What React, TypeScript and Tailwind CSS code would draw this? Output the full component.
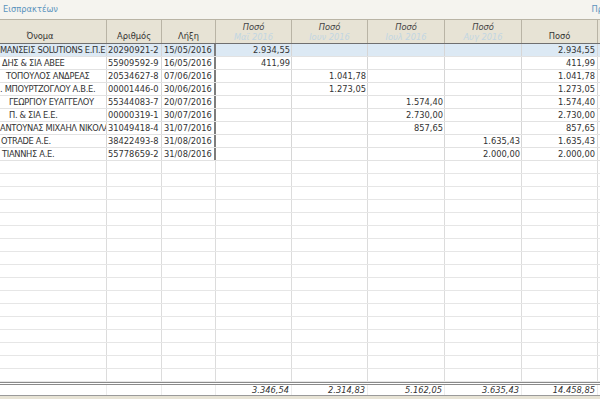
const rows = [
  { name: 'ΜΑΝΣΕΙΣ SOLUTIONS Ε.Π.Ε', pl: 'pl-0', num: '20290921-2', due: '15/05/2016', m: 0, amt: '2.934,55' },
  { name: 'ΔΗΣ & ΣΙΑ ΑΒΕΕ', pl: 'pl-[2px]', num: '55909592-9', due: '16/05/2016', m: 0, amt: '411,99' },
  { name: 'ΤΟΠΟΥΛΟΣ ΑΝΔΡΕΑΣ', pl: 'pl-[6px]', num: '20534627-8', due: '07/06/2016', m: 1, amt: '1.041,78' },
  { name: '. ΜΠΟΥΡΤΖΟΓΛΟΥ Α.Β.Ε.', pl: 'pl-0', num: '00001446-0', due: '30/06/2016', m: 1, amt: '1.273,05' },
  { name: 'ΓΕΩΡΓΙΟΥ ΕΥΑΓΓΕΛΟΥ', pl: 'pl-[9px]', num: '55344083-7', due: '20/07/2016', m: 2, amt: '1.574,40' },
  { name: 'Π. & ΣΙΑ Ε.Ε.', pl: 'pl-[9px]', num: '00000319-1', due: '30/07/2016', m: 2, amt: '2.730,00' },
  { name: 'ΑΝΤΟΥΝΑΣ ΜΙΧΑΗΛ ΝΙΚΟΛΑ', pl: 'pl-0', num: '31049418-4', due: '31/07/2016', m: 2, amt: '857,65' },
  { name: 'ΟΤRADE Α.Ε.', pl: 'pl-[1px]', num: '38422493-8', due: '31/08/2016', m: 3, amt: '1.635,43' },
  { name: 'ΤΙΑΝΝΗΣ Α.Ε.', pl: 'pl-[2px]', num: '55778659-2', due: '31/08/2016', m: 3, amt: '2.000,00' },
]

const months = ['Μαϊ 2016', 'Ιουν 2016', 'Ιουλ 2016', 'Αυγ 2016']
const totals = ['3.346,54', '2.314,83', '5.162,05', '3.635,43', '14.458,85']

const cols = 'grid grid-cols-[107px_55px_54px_76px_76px_77px_77px_76px_2px]'

export default function App() {
  const empty = Array.from({ length: 17 })
  return (
    <div className="w-[600px] h-[399px] overflow-hidden bg-[#f5f4ef] text-[#333] text-[8.3px] leading-none" style={{ fontFamily: '"DejaVu Sans", Verdana, sans-serif' }}>
      <div className="h-[19px] flex items-start justify-between pl-[3px] pt-[5px] text-[#5b93bd]">
        <span>Εισπρακτέων</span>
        <span className="-mr-[3px]">Πρ</span>
      </div>

      <div className={`${cols} h-[25px] bg-[#e7e3d5] border-t border-[#b9b4a5] border-b border-b-[#6f6f6f]`}>
        <div className="border-r border-[#b9b4a5] flex items-end justify-center pb-[3px] pr-[26px]">Όνομα</div>
        <div className="border-r border-[#b9b4a5] flex items-end justify-center pb-[3px]">Αριθμός</div>
        <div className="border-r border-[#b9b4a5] flex items-end justify-center pb-[3px]">Λήξη</div>
        {months.map((m) => (
          <div key={m} className="border-r border-[#b9b4a5] flex flex-col items-center justify-between pt-[3px] pb-[2px] italic">
            <span className="text-[#444]">Ποσό</span>
            <span className="text-[#c2d6e2]">{m}</span>
          </div>
        ))}
        <div className="border-r border-[#b9b4a5] flex items-end justify-center pb-[3px]">Ποσό</div>
        <div />
      </div>

      <div className="bg-white">
        {rows.map((r, i) => (
          <div key={r.num} className={`${cols} h-[13px] border-b border-[#e2e2e2] ${i === 0 ? 'bg-[#dce9f4]' : ''}`}>
            <div className={`border-r border-[#d6d6d6] overflow-hidden whitespace-nowrap flex items-center tracking-[-0.3px] ${r.pl}`}>{r.name}</div>
            <div className="border-r border-[#d6d6d6] flex items-center pl-[1px] whitespace-nowrap">{r.num}</div>
            <div className="border-r-2 border-[#7d7d7d] flex items-center pl-[2px] whitespace-nowrap">{r.due}</div>
            {months.map((m, k) => (
              <div key={m} className="border-r border-[#d6d6d6] flex items-center justify-end pr-[1px]">
                {k === r.m ? r.amt : ''}
              </div>
            ))}
            <div className="border-r border-[#d6d6d6] flex items-center justify-end pr-[2px]">{r.amt}</div>
            <div />
          </div>
        ))}
        {empty.map((_, i) => (
          <div key={i} className={`${cols} h-[13px] border-b border-[#e6e6e6]`}>
            {Array.from({ length: 8 }).map((__, k) => (
              <div key={k} className="border-r border-[#dcdcdc]" />
            ))}
            <div />
          </div>
        ))}
      </div>

      <div className={`${cols} h-[14px] bg-white border-t-[3px] border-double border-[#8a8a8a] border-b border-b-[#9a9a9a] italic`}>
        <div className="border-r border-[#ececec]" />
        <div className="border-r border-[#ececec]" />
        <div className="border-r border-[#ececec]" />
        {totals.map((t) => (
          <div key={t} className="border-r border-[#ececec] flex items-center justify-end pr-[2px]">{t}</div>
        ))}
        <div />
      </div>
      <div className="h-[10px] bg-[#e7e3d5]" />
    </div>
  )
}
